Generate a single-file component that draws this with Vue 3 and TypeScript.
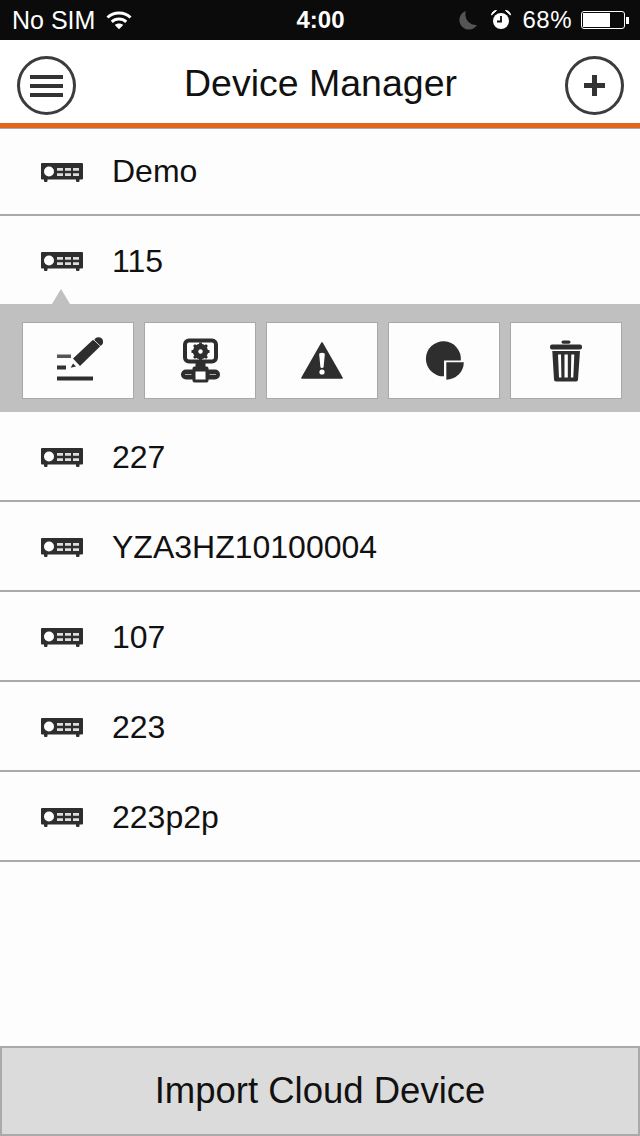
<template>
  <div class="page">
    <div class="status-bar">
      <div class="status-left">
        <span>No SIM</span>
        <svg class="wifi" width="26" height="20" viewBox="0 0 26 20">
          <path d="M1.5 7.5C7.8 1.6 18.2 1.6 24.5 7.5" fill="none" stroke="#fff" stroke-width="3" />
          <path d="M5.8 11.8C9.8 8.2 16.2 8.2 20.2 11.8" fill="none" stroke="#fff" stroke-width="3" />
          <path d="M8.8 15L13 19.2L17.2 15C14.8 13 11.2 13 8.8 15Z" fill="#fff" />
        </svg>
      </div>
      <div class="status-time">4:00</div>
      <div class="status-right">
        <svg width="20" height="20" viewBox="0 0 20 20">
          <path d="M8 1A9.5 9.5 0 1 0 19 15A10.5 10.5 0 0 1 8 1Z" fill="#555" />
        </svg>
        <svg class="alarm" width="22" height="22" viewBox="0 0 22 22">
          <circle cx="11" cy="12" r="8" fill="#fff" />
          <path d="M11 7V12.5H7" fill="none" stroke="#0b0b0b" stroke-width="1.8" />
          <path d="M1.5 6C2 3 4 1.5 6.5 1.5ZM20.5 6C20 3 18 1.5 15.5 1.5Z" fill="#fff" stroke="#fff" />
        </svg>
        <span class="battery-text">68%</span>
        <div class="battery">
          <div class="battery-fill" :style="{ width: batteryLevel + '%' }"></div>
        </div>
        <div class="battery-tip"></div>
      </div>
    </div>

    <div class="nav-bar">
      <button class="round-btn">
        <svg width="33" height="22" viewBox="0 0 33 22">
          <path d="M0 2H33M0 11H33M0 20H33" stroke="#333" stroke-width="4" />
        </svg>
      </button>
      <div class="nav-title">Device Manager</div>
      <button class="round-btn">
        <svg width="21" height="21" viewBox="0 0 21 21">
          <path d="M10.5 0V21M0 10.5H21" stroke="#333" stroke-width="5" />
        </svg>
      </button>
    </div>

    <div class="list">
      <template v-for="device in devices" :key="device.name">
        <div class="row" :class="{ open: device.open }">
          <svg class="projector" width="42" height="20" viewBox="0 0 42 20">
            <path d="M1 0H41Q42 0 42 1V15.5Q42 16.5 41 16.5H1Q0 16.5 0 15.5V1Q0 0 1 0Z" fill="#2e2e2e" />
            <path d="M3 16H6.5V18Q6.5 19 5.5 19H4Q3 19 3 18ZM35 16H38.5V18Q38.5 19 37.5 19H36Q35 19 35 18Z" fill="#2e2e2e" />
            <circle cx="8" cy="8.5" r="5" fill="#fff" />
            <path d="M16 5H22V7.8H16ZM24 5H30V7.8H24ZM32 5H38V7.8H32ZM16 10.3H22V13H16ZM24 10.3H30V13H24ZM32 10.3H38V13H32Z" fill="#ddd" />
          </svg>
          <span>{{ device.name }}</span>
          <div v-if="device.open" class="pointer"></div>
        </div>

        <div v-if="device.open" class="actions">
          <button class="action">
            <svg width="50" height="48" viewBox="0 0 50 48">
              <path d="M20 21.5L27 29L47 9.5L40 2.8Z" fill="#2e2e2e" />
              <circle cx="45.5" cy="4.8" r="4.6" fill="#2e2e2e" />
              <path d="M41 3L47.5 9.3" stroke="#fff" stroke-width="0.8" />
              <path d="M17.7 30.8L20 26.5L23 29.5Z" fill="#2e2e2e" />
              <rect x="4" y="17.5" width="14" height="3.5" fill="#555" />
              <rect x="4" y="28.5" width="9" height="4" fill="#333" />
              <rect x="4" y="39.5" width="36" height="4" fill="#2e2e2e" />
            </svg>
          </button>
          <button class="action">
            <svg width="40" height="46" viewBox="0 0 40 46">
              <rect x="5" y="2.5" width="31" height="21" rx="4" fill="#fff" stroke="#2e2e2e" stroke-width="4" />
              <circle cx="20.5" cy="13.5" r="5.5" fill="none" stroke="#2e2e2e" stroke-width="4.4" />
              <path d="M20.5 4.5V22.5M11.5 13.5H29.5M14 7L27 20M27 7L14 20" stroke="#2e2e2e" stroke-width="2.8" />
              <circle cx="20.5" cy="13.5" r="2.2" fill="#fff" />
              <rect x="15.5" y="25" width="10" height="7" fill="#2e2e2e" />
              <rect x="1" y="31.5" width="39" height="10" rx="5" fill="#2e2e2e" />
              <rect x="12.5" y="28.5" width="16" height="16" rx="2" fill="#2e2e2e" />
              <rect x="15.5" y="33.5" width="10" height="8" fill="#fff" />
              <path d="M5 36.5H11.5M29.5 36.5H36" stroke="#aaa" stroke-width="1.2" />
            </svg>
          </button>
          <button class="action">
            <svg width="42" height="38" viewBox="0 0 42 38">
              <path d="M21 1L41 36H1Z" fill="#2e2e2e" stroke="#2e2e2e" stroke-width="1.6" stroke-linejoin="round" />
              <path d="M18.2 12.5Q18 10.8 21 10.8Q24 10.8 23.8 12.5L22.6 25Q22.4 26 21 26Q19.6 26 19.4 25Z" fill="#fff" />
              <circle cx="21" cy="30" r="2.6" fill="#fff" />
            </svg>
          </button>
          <button class="action">
            <svg width="42" height="40" viewBox="0 0 42 40">
              <path d="M37.8 19.5H21V35.3A17.5 17.5 0 1 1 37.8 19.5Z" fill="#2e2e2e" />
              <path d="M23.3 21.2H40.8A17.5 17.5 0 0 1 23.3 38.7Z" fill="#2e2e2e" />
            </svg>
          </button>
          <button class="action">
            <svg width="34" height="42" viewBox="0 0 34 42">
              <rect x="12.5" y="0.5" width="9" height="3.2" rx="1.6" fill="#2e2e2e" />
              <rect x="1" y="4.5" width="32" height="5" rx="2" fill="#2e2e2e" />
              <path d="M3.3 11H31L29 39.5Q29 41.5 27 41.5H7Q5 41.5 5 39.5Z" fill="#2e2e2e" />
              <path d="M9 14.5H12L12.4 37.5H10ZM15.5 14.5H18.8V37.5H15.5ZM22.3 14.5H25.3L24.3 37.5H21.9Z" fill="#fff" />
            </svg>
          </button>
        </div>
      </template>
    </div>

    <button class="import-btn">Import Cloud Device</button>
  </div>
</template>

<script setup lang="ts">
interface Device {
  name: string
  open?: boolean
}

const batteryLevel = 68

const devices: Device[] = [
  { name: 'Demo' },
  { name: '115', open: true },
  { name: '227' },
  { name: 'YZA3HZ10100004' },
  { name: '107' },
  { name: '223' },
  { name: '223p2p' }
]
</script>

<style>
body {
  background: #fdfdfd;
}
</style>

<style scoped>
.page {
  display: flex;
  flex-direction: column;
  width: 640px;
  height: 1136px;
  overflow: hidden;
  background: #fdfdfd;
  font-family: 'Liberation Sans', Arial, sans-serif;
  color: #111;
}

.status-bar {
  display: grid;
  grid-template-columns: 1fr auto 1fr;
  align-items: center;
  height: 40px;
  padding: 0 11px 0 12px;
  box-sizing: border-box;
  background: #0b0b0b;
  color: #fff;
  font-size: 25px;
}

.status-left {
  display: flex;
  align-items: center;
  gap: 11px;
}

.status-time {
  font-size: 24px;
  font-weight: bold;
}

.status-right {
  display: flex;
  align-items: center;
  justify-content: flex-end;
}

.alarm {
  margin-left: 12px;
}

.battery-text {
  margin-left: 10px;
  font-size: 24px;
  letter-spacing: 0.5px;
}

.battery {
  width: 44px;
  height: 18px;
  margin-left: 9px;
  padding: 1px;
  box-sizing: border-box;
  border: 1px solid #fff;
  border-radius: 3px;
}

.battery-fill {
  height: 100%;
  background: #fff;
}

.battery-tip {
  width: 3px;
  height: 7px;
  margin-left: 1px;
  background: #fff;
}

.nav-bar {
  display: flex;
  align-items: center;
  justify-content: space-between;
  height: 88px;
  padding: 8px 16px 0 17px;
  box-sizing: border-box;
  background: #fff;
  border-bottom: 5px solid #e2671a;
}

.nav-title {
  margin-bottom: 4px;
  font-size: 37.5px;
  color: #111;
}

.round-btn {
  display: flex;
  align-items: center;
  justify-content: center;
  width: 59px;
  height: 59px;
  padding: 0;
  background: transparent;
  border: 3px solid #3c3c3c;
  border-radius: 50%;
}

.list {
  flex: 1;
  border-top: 1px solid #aaa;
}

.row {
  position: relative;
  display: flex;
  align-items: center;
  gap: 29px;
  height: 90px;
  padding: 2px 0 0 41px;
  box-sizing: border-box;
  border-bottom: 2px solid #aaa;
  font-size: 32px;
}

.row:first-child {
  height: 87px;
  padding-top: 0;
}

.row.open {
  height: 88px;
  border-bottom: 0;
}

.projector {
  flex: none;
  margin-top: 2px;
}

.pointer {
  position: absolute;
  left: 52px;
  bottom: 0;
  width: 0;
  height: 0;
  border-left: 9px solid transparent;
  border-right: 9px solid transparent;
  border-bottom: 15px solid #c0c0c0;
}

.actions {
  display: flex;
  gap: 10px;
  height: 108px;
  padding: 18px 18px 13px 22px;
  box-sizing: border-box;
  background: #c0c0c0;
}

.action {
  display: flex;
  align-items: center;
  justify-content: center;
  width: 112px;
  height: 77px;
  padding: 0;
  background: #fdfdfd;
  border: 1px solid #a8a8a8;
}

.import-btn {
  flex: none;
  height: 90px;
  padding: 0;
  background: #dbdbdb;
  border: 2px solid #aaa;
  font-family: inherit;
  font-size: 36.5px;
  color: #111;
}
</style>
